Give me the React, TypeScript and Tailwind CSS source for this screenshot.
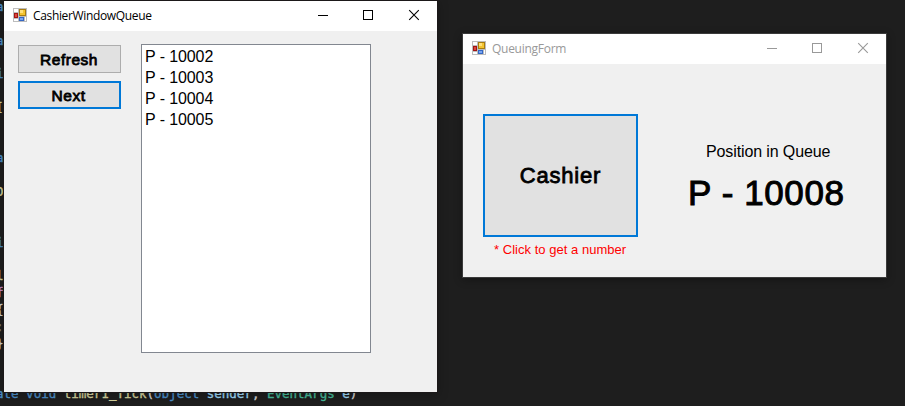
import React from 'react';

type Span = [text: string, color: string];

const BLUE = 'text-[#4b8fca]';
const SAND = 'text-[#d5d29d]';
const PALE = 'text-[#9cd6f5]';
const WHITE = 'text-[#d4d4d4]';

const codeLines: Span[][] = [
  [['a', BLUE]],
  [],
  [['a', BLUE]],
  [],
  [['i', BLUE]],
  [],
  [['[', SAND]],
  [],
  [],
  [['a', BLUE]],
  [],
  [['D', SAND]],
  [],
  [],
  [['i', BLUE]],
  [],
  [['l', SAND]],
  [['f', 'text-[#c586c0]']],
  [['{', WHITE]],
  [[':', 'text-[#808080]']],
  [['}', WHITE]],
  [],
  [],
  [
    ['ate void ', BLUE],
    ['timer1_Tick', SAND],
    ['(', WHITE],
    ['object ', BLUE],
    ['sender', PALE],
    [', ', WHITE],
    ['EventArgs ', 'text-[#45b898]'],
    ['e', PALE],
    [')', WHITE],
  ],
];

function FormIcon() {
  return (
    <svg width="14" height="14" viewBox="0 0 14 14" shapeRendering="crispEdges" className="block shrink-0">
      <rect width="14" height="14" fill="#bdbdbd" />
      <rect x="1" y="1" width="4" height="3" fill="#fff" />
      <rect x="1" y="11" width="4" height="2" fill="#fff" />
      <rect x="1" y="5" width="4" height="5" fill="#a31414" />
      <rect x="2" y="6" width="2" height="3" fill="#d9483c" />
      <rect x="6" y="1" width="7" height="7" fill="#a87c10" />
      <rect x="7" y="2" width="5" height="5" fill="#f4c430" />
      <rect x="7" y="2" width="3" height="3" fill="#ffe07a" />
      <rect x="6" y="9" width="5" height="4" fill="#3567c4" />
      <rect x="7" y="10" width="3" height="2" fill="#79a5f0" />
      <rect x="12" y="9" width="1" height="4" fill="#fff" />
    </svg>
  );
}

function TitleBar({ title, active }: { title: string; active: boolean }) {
  return (
    <div className={`flex h-[30px] bg-white pl-[9px] ${active ? 'text-black' : 'text-[#999]'}`}>
      <div className="pt-[7px]">
        <FormIcon />
      </div>
      <span
        className={`ml-[6px] whitespace-nowrap font-['Open_Sans',sans-serif] text-[12px] leading-[30px] ${
          active ? 'tracking-[-0.35px]' : 'tracking-[-0.27px]'
        }`}
      >
        {title}
      </span>
      <svg
        width="106"
        height="12"
        viewBox="0 0 106 12"
        fill="none"
        stroke="currentColor"
        className="ml-auto mr-[13px] mt-[8px] block shrink-0"
      >
        <path d="M0 6.5H10M45.5 1.5H54.5V10.5H45.5Z" shapeRendering="crispEdges" />
        <path d="M91.2 1.2L100.8 10.8M100.8 1.2L91.2 10.8" strokeWidth="1.1" />
      </svg>
    </div>
  );
}

export default function App() {
  return (
    <div className="relative h-[406px] w-[905px] overflow-hidden bg-[#1e1e1e] font-['Liberation_Sans',Arial,sans-serif] text-black">
      <div className="-ml-[4px] -mt-[1px] font-['DejaVu_Sans_Mono',monospace] text-[12.5px] leading-[16.83px] [-webkit-text-stroke:0.35px_currentColor]">
        {codeLines.map((line, i) => (
          <div key={i} className="h-[16.83px] whitespace-pre">
            {line.map(([text, color], j) => (
              <span key={j} className={color}>
                {text}
              </span>
            ))}
          </div>
        ))}
      </div>

      <section className="absolute left-[4px] top-[1px] flex h-[391px] w-[433px] flex-col bg-[#f0f0f0] shadow-[0_0_0_1px_#1b1819,0_2px_10px_1px_rgba(0,0,0,0.25)]">
        <TitleBar title="CashierWindowQueue" active />
        <div className="flex gap-[20px] pl-[14px] pt-[13px]">
          <div className="flex w-[103px] flex-col gap-[8px] pt-[1px] text-[15.5px] tracking-[0.5px] [-webkit-text-stroke:0.8px_black]">
            <button className="flex h-[28px] items-center justify-center border border-[#adadad] bg-[#e1e1e1] pr-[1px] pt-[2px]">
              Refresh
            </button>
            <button className="flex h-[28px] items-center justify-center border-2 border-[#0078d7] bg-[#e1e1e1] pr-[2px] pt-[2px]">
              Next
            </button>
          </div>
          <ul className="h-[309px] w-[230px] border border-[#828790] bg-white pl-[3px] pt-[1px] text-[16px] leading-[21px] tracking-[-0.1px]">
            {['P - 10002', 'P - 10003', 'P - 10004', 'P - 10005'].map((ticket) => (
              <li key={ticket}>{ticket}</li>
            ))}
          </ul>
        </div>
      </section>

      <section className="absolute left-[463px] top-[34px] flex h-[243px] w-[423px] flex-col bg-[#f0f0f0] shadow-[0_0_0_1px_#3a3a3a,0_2px_8px_1px_rgba(0,0,0,0.3)]">
        <TitleBar title="QueuingForm" active={false} />
        <div className="flex pl-[20px] pt-[50px]">
          <div className="w-[155px]">
            <button className="flex h-[123px] w-[155px] items-center justify-center border-2 border-[#0078d7] bg-[#e1e1e1] text-[22px] tracking-[0.8px] [-webkit-text-stroke:0.8px_black]">
              Cashier
            </button>
            <p className="whitespace-nowrap pl-[11px] pt-[3px] text-[13px] leading-[20px] tracking-[0.03px] text-[#ff0000]">
              * Click to get a number
            </p>
          </div>
          <div className="ml-[50px] w-[160px] pt-[26px]">
            <p className="whitespace-nowrap pl-[18px] text-[16px] leading-[24px] tracking-[-0.12px]">Position in Queue</p>
            <p className="mt-[9px] whitespace-nowrap text-[35px] leading-[40px] tracking-[0.6px] [-webkit-text-stroke:1px_black]">
              P - 10008
            </p>
          </div>
        </div>
      </section>
    </div>
  );
}
